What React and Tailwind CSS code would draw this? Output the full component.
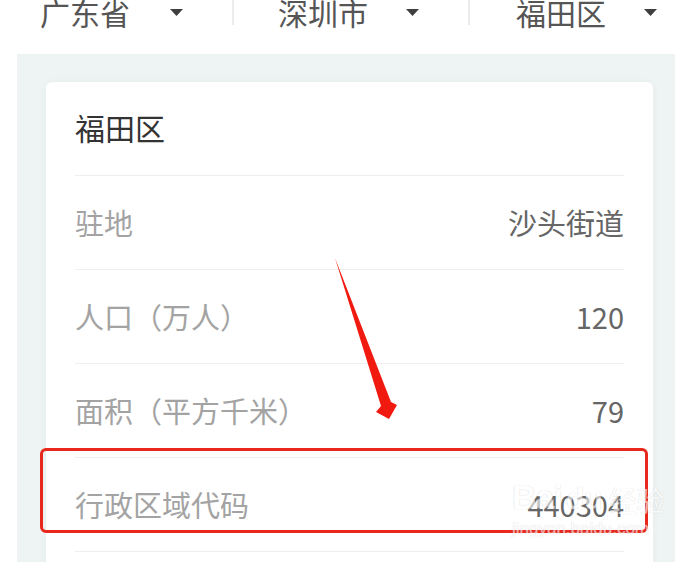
import React from 'react';

const Caret = () => (
  <svg width="13" height="7" viewBox="0 0 13 7" className="shrink-0">
    <path d="M0 0 L13 0 L6.5 7 Z" fill="#3f3f3f" />
  </svg>
);

const rows = [
  { label: '驻地', value: '沙头街道' },
  { label: '人口（万人）', value: '120' },
  { label: '面积（平方千米）', value: '79' },
  { label: '行政区域代码', value: '440304' },
  { label: '', value: '' },
];

const App = () => {
  return (
    <div className="w-[676px] h-[562px] overflow-hidden bg-white relative font-['Noto_Sans_CJK_SC','Noto_Sans',sans-serif]">
      {/* Region pickers */}
      <div className="flex h-[54px]">
        <div className="w-[232px] shrink-0 flex items-start justify-between pl-[40px] pr-[49px]">
          <span className="-mt-[3px] text-[30px] leading-[30px] text-[#555]">广东省</span>
          <span className="mt-[9px]"><Caret /></span>
        </div>
        <div className="w-[236px] shrink-0 flex items-start justify-between pl-[46px] pr-[49px] relative">
          <span className="absolute left-0 top-0 h-[25px] w-[2px] bg-[#ececec]" />
          <span className="-mt-[3px] text-[30px] leading-[30px] text-[#555]">深圳市</span>
          <span className="mt-[9px]"><Caret /></span>
        </div>
        <div className="w-[208px] shrink-0 flex items-start justify-between pl-[48px] pr-[19px] relative">
          <span className="absolute left-0 top-0 h-[25px] w-[2px] bg-[#ececec]" />
          <span className="-mt-[3px] text-[30px] leading-[30px] text-[#555]">福田区</span>
          <span className="mt-[9px]"><Caret /></span>
        </div>
      </div>

      {/* Detail panel */}
      <div className="ml-[17px] mr-[1px] h-[508px] bg-[#eef3f3] pt-[28px] pl-[29px] pr-[22px]">
        <div className="relative bg-white rounded-[6px] shadow-[0_0_8px_rgba(0,0,0,0.04)] px-[29px]">
          <div className="h-[94px] flex items-center border-b border-[#eeeeee]">
            <span className="text-[30px] text-[#333] -mt-[2px]">福田区</span>
          </div>
          {rows.map((r, i) => (
            <div key={i} className="h-[94px] flex items-center justify-between border-b border-[#eeeeee]">
              <span className="text-[29px] text-[#a3a3a3]">{r.label}</span>
              <span className="text-[29px] text-[#666]">{r.value}</span>
            </div>
          ))}

          {/* highlight box */}
          <div className="absolute left-[-6px] top-[366px] w-[608px] h-[85px] border-[3px] border-[#e8271d] rounded-[6px]" />
        </div>
      </div>

      {/* arrow */}
      <svg className="absolute left-0 top-0 pointer-events-none" width="676" height="562" viewBox="0 0 676 562">
        <path d="M335 258 L391 402 L397 405 L389 419 L376 412 L381 406 Z" fill="#f11a10" />
      </svg>

      {/* watermark */}
      <div className="absolute left-[512px] top-[480px] pointer-events-none text-white [text-shadow:0_0_1px_#b0b0b0] opacity-60">
        <div className="flex items-end gap-[4px] leading-none">
          <span className="text-[34px] font-['Liberation_Sans',sans-serif] font-bold tracking-[-1px]">Bai</span>
          <span className="text-[30px] font-['Liberation_Sans',sans-serif] font-bold">du</span>
          <span className="text-[28px] ml-[2px]">经验</span>
        </div>
        <div className="text-[17px] leading-none mt-[6px] font-['Liberation_Sans',sans-serif]">jingyan.baidu.com</div>
      </div>
    </div>
  );
};

export default App;
